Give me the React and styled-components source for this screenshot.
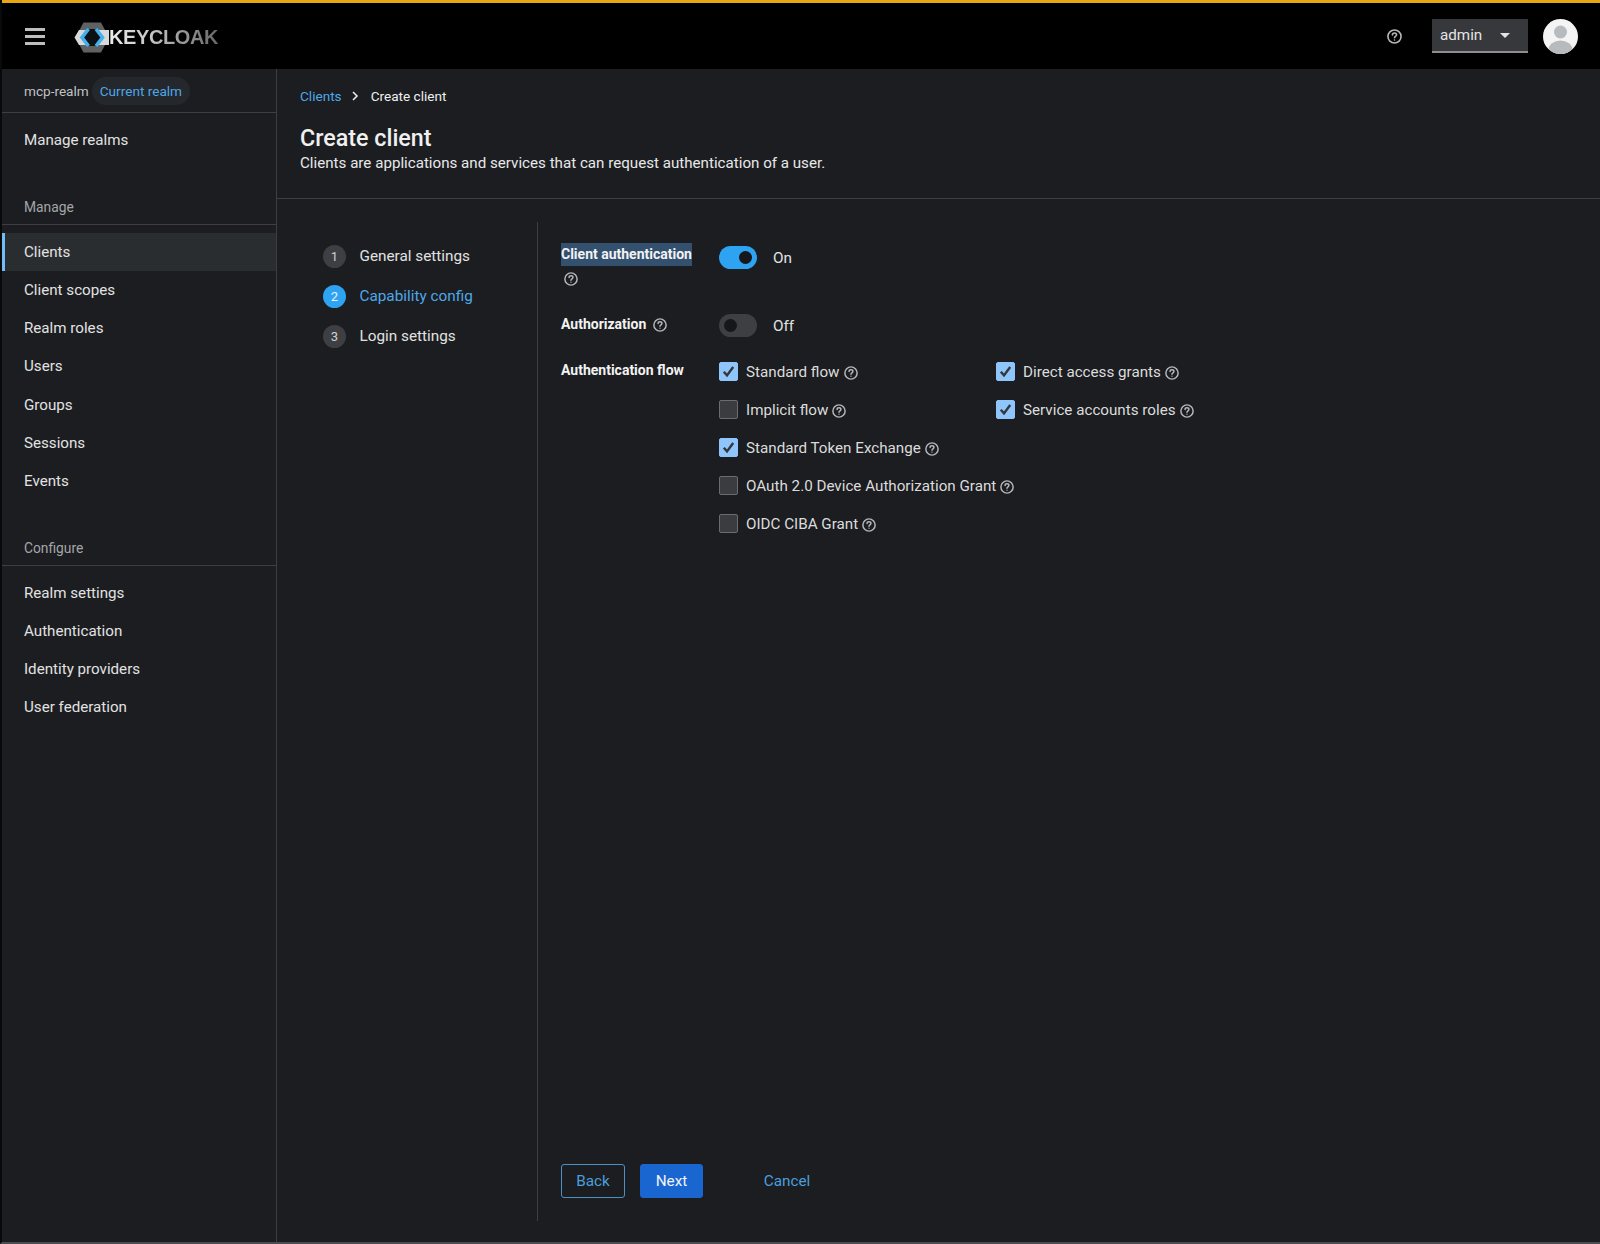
import React from 'react';
import styled, { createGlobalStyle } from 'styled-components';

const Global = createGlobalStyle`
  html, body { margin: 0; padding: 0; background: #1b1d21; }
  body { font-family: Roboto, "Noto Sans", sans-serif; color: #e0e0e0; }
  * { box-sizing: border-box; }
`;

const Page = styled.div`
  width: 1600px;
  height: 1244px;
  display: flex;
  flex-direction: column;
  background: #1b1d21;
  border-left: 2px solid #08090a;
  border-bottom: 2px solid #4a4c50;
  overflow: hidden;
`;

const Header = styled.header`
  height: 69px;
  flex: none;
  background: #000;
  border-top: 3px solid #e8a811;
  display: flex;
  align-items: center;
  padding: 0 22px 0 23px;
`;

const Burger = styled.div`
  width: 20px;
  display: flex;
  flex-direction: column;
  gap: 4px;
  margin-right: 29px;
  span { height: 3px; background: #bdbdbd; display: block; }
`;

const Logo = styled.div`
  display: flex;
  align-items: center;
  margin-top: 3px;
`;

const LogoText = styled.span`
  font-family: "Liberation Sans", Arial, sans-serif;
  font-weight: 700;
  font-size: 20px;
  letter-spacing: -0.4px;
  margin-left: -2px;
  background: linear-gradient(90deg, #ececec 0%, #c4c4c4 40%, #666 100%);
  -webkit-background-clip: text;
  background-clip: text;
  color: transparent;
`;

const HeaderRight = styled.div`
  margin-left: auto;
  display: flex;
  align-items: center;
`;

const UserSelect = styled.div`
  width: 96px;
  height: 34px;
  margin-left: 30px;
  margin-right: 15px;
  background: #36383c;
  border-bottom: 2px solid #8e8e8e;
  display: flex;
  align-items: center;
  justify-content: space-between;
  padding: 0 18px 0 8px;
  font-size: 15.2px;
  color: #e4e4e4;
`;

const Caret = styled.span`
  width: 0;
  height: 0;
  border-left: 5px solid transparent;
  border-right: 5px solid transparent;
  border-top: 5px solid #e4e4e4;
`;

const Body = styled.div`
  flex: 1;
  display: flex;
  min-height: 0;
`;

const Sidebar = styled.aside`
  width: 275px;
  flex: none;
  border-right: 1px solid #3c3e42;
  display: flex;
  flex-direction: column;
`;

const RealmRow = styled.div`
  height: 44px;
  flex: none;
  border-bottom: 1px solid #3c3e42;
  display: flex;
  align-items: center;
  padding: 0 0 0 22px;
  margin-bottom: 8px;
  font-size: 13.6px;
  color: #c0c2c4;
`;

const RealmBadge = styled.span`
  margin-left: 3px;
  height: 28px;
  padding: 0 8px;
  border-radius: 14px;
  background: #24272b;
  color: #4ea8e8;
  display: flex;
  align-items: center;
`;

const NavItem = styled.div`
  height: 38.1px;
  display: flex;
  align-items: center;
  padding-left: 22px;
  font-size: 15.15px;
  color: #e2e2e2;
  background: ${p => (p.$active ? '#2a2d30' : 'transparent')};
  box-shadow: ${p => (p.$active ? 'inset 3px 0 0 #73bcf7' : 'none')};
`;

const NavGroup = styled.div`
  margin-top: 31px;
`;

const NavTitle = styled.div`
  height: 35px;
  padding-left: 22px;
  border-bottom: 1px solid #3c3e42;
  margin-bottom: 8px;
  font-size: 13.8px;
  color: #a4a6a8;
  display: flex;
  align-items: center;
`;

const Main = styled.main`
  flex: 1;
  min-width: 0;
  display: flex;
  flex-direction: column;
`;

const PageHead = styled.section`
  height: 130px;
  flex: none;
  border-bottom: 1px solid #3c3e42;
  padding: 17px 23px 0;
`;

const Breadcrumb = styled.nav`
  display: flex;
  align-items: center;
  height: 20px;
  font-size: 13.6px;
  color: #f0f0f0;
  a { color: #4ea8e8; }
  svg { margin: 0 12px 0 9px; }
`;

const Title = styled.h1`
  margin: 18px 0 0;
  font-size: 23.3px;
  line-height: 28px;
  font-weight: 500;
  color: #f0f0f0;
`;

const Subtitle = styled.p`
  margin: 0;
  font-size: 15.15px;
  line-height: 22px;
  color: #e8e8e8;
`;

const Wizard = styled.section`
  flex: 1;
  min-height: 0;
  display: flex;
  padding: 23px 0 21px;
`;

const Steps = styled.ol`
  width: 261px;
  flex: none;
  margin: 0;
  padding: 14px 0 0 46px;
  list-style: none;
  border-right: 1px solid #3c3e42;
`;

const Step = styled.li`
  height: 40px;
  display: flex;
  align-items: center;
  font-size: 15.3px;
  color: ${p => (p.$current ? '#4ea8e8' : '#e2e2e2')};
`;

const StepNumber = styled.span`
  width: 23px;
  height: 23px;
  border-radius: 50%;
  margin-right: 13.5px;
  background: ${p => (p.$current ? '#2ea3f2' : '#3d3f43')};
  color: ${p => (p.$current ? '#e6f4ff' : '#d0d0d0')};
  font-size: 13px;
  display: flex;
  align-items: center;
  justify-content: center;
`;

const Panel = styled.div`
  flex: 1;
  display: flex;
  flex-direction: column;
  padding: 21px 0 0 23px;
`;

const FormRow = styled.div`
  display: grid;
  grid-template-columns: 158px 1fr;
  align-items: start;
  margin-bottom: ${p => p.$gap || 0}px;
`;

const Label = styled.div`
  font-size: 14px;
  font-weight: 700;
  line-height: 20px;
  color: #f2f2f2;
  white-space: nowrap;
  display: flex;
  align-items: center;
`;

const Marked = styled.span`
  display: inline-block;
  height: 23px;
  line-height: 23px;
  background: #33506f;
`;

const LabelStack = styled.div`
  display: flex;
  flex-direction: column;
  align-items: flex-start;
  gap: 6px;
`;

const ToggleRow = styled.div`
  display: flex;
  align-items: center;
  height: 23px;
  margin-top: ${p => p.$top || 0}px;
  font-size: 15.3px;
  color: #e2e2e2;
`;

const Track = styled.span`
  width: 38px;
  height: 23px;
  border-radius: 12px;
  margin-right: 16px;
  background: ${p => (p.$on ? '#2ea3f2' : '#3d3f43')};
  display: flex;
  align-items: center;
  justify-content: ${p => (p.$on ? 'flex-end' : 'flex-start')};
  padding: 0 5px;
  &::after {
    content: '';
    width: 13px;
    height: 13px;
    border-radius: 50%;
    background: #15171a;
  }
`;

const FlowGrid = styled.div`
  display: grid;
  grid-template-columns: 277px 1fr;
  grid-auto-rows: 38.1px;
`;

const CheckRow = styled.div`
  display: flex;
  align-items: center;
  height: 23px;
  font-size: 15.2px;
  color: #dcdcdc;
  white-space: nowrap;
`;

const Box = styled.span`
  width: 19px;
  height: 19px;
  flex: none;
  margin-right: 8px;
  border-radius: 2px;
  background: ${p => (p.$on ? '#8fc5fb' : '#3a3c40')};
  border: 1px solid ${p => (p.$on ? '#8fc5fb' : '#6a6c70')};
  display: flex;
  align-items: center;
  justify-content: center;
`;

const Actions = styled.div`
  margin-top: auto;
  display: flex;
  align-items: center;
  padding-bottom: 23px;
`;

const Button = styled.button`
  height: 34px;
  width: ${p => p.$w}px;
  margin-right: ${p => p.$mr || 0}px;
  padding: 0;
  border-radius: 3px;
  font-family: inherit;
  font-size: 15.3px;
  color: ${p => (p.$primary ? '#f4f4f4' : '#4a9fdc')};
  background: ${p => (p.$primary ? '#1a66d1' : 'transparent')};
  border: 1px solid ${p => (p.$primary ? '#1a66d1' : p.$link ? 'transparent' : '#4c91c4')};
`;

const Help = ({ size = 14, ml = 4, mt = 3 }) => (
  <svg width={size} height={size} viewBox="0 0 16 16" fill="none" stroke="#b4b6b8" strokeWidth="1.7"
    style={{ marginLeft: ml, marginTop: mt, flex: 'none' }}>
    <circle cx="8" cy="8" r="7" />
    <path d="M5.8 6.3c0-1.3 1-2 2.2-2s2.2.8 2.2 1.9c0 1.6-2.2 1.6-2.2 3.2" strokeLinecap="round" />
    <circle cx="8" cy="11.6" r="0.8" fill="#b4b6b8" stroke="none" />
  </svg>
);

const Check = () => (
  <svg width="13" height="13" viewBox="0 0 13 13" fill="none" stroke="#33363a" strokeWidth="2.4">
    <path d="M1.8 6.8l3.2 3.6 6.2-8.4" />
  </svg>
);

const KeycloakMark = () => (
  <svg width="37" height="31" viewBox="0 0 37 31">
    <path d="M9.5 0.5H27L35 15.5 27 30.5H9.5L1.5 15.5z" fill="#5f6163" />
    <path d="M0.5 15.5L5 8H35V23H5z" fill="#d8d9da" />
    <path d="M13.5 7H23L29 15.5 23 24H13.5L7.5 15.5z" fill="#0d1114" />
    <path d="M14.5 7L8 15.5 14.5 24M22 7L28.5 15.5 22 24" fill="none" stroke="#45b0ee" strokeWidth="3.6" />
  </svg>
);

const Avatar = () => (
  <svg width="35" height="35" viewBox="0 0 35 35">
    <defs><clipPath id="av"><circle cx="17.5" cy="17.5" r="17.5" /></clipPath></defs>
    <circle cx="17.5" cy="17.5" r="17.5" fill="#f4f4f4" />
    <g clipPath="url(#av)" fill="#b8bbbe">
      <circle cx="17.5" cy="13" r="6.5" />
      <ellipse cx="17.5" cy="31" rx="12" ry="9.5" />
    </g>
  </svg>
);

const manage = ['Client scopes', 'Realm roles', 'Users', 'Groups', 'Sessions', 'Events'];
const configure = ['Realm settings', 'Authentication', 'Identity providers', 'User federation'];
const steps = ['General settings', 'Capability config', 'Login settings'];
const flows = [
  ['Standard flow', true],
  ['Direct access grants', true],
  ['Implicit flow', false],
  ['Service accounts roles', true],
  ['Standard Token Exchange', true],
  null,
  ['OAuth 2.0 Device Authorization Grant', false],
  null,
  ['OIDC CIBA Grant', false],
];

export default function App() {
  return (
    <Page>
      <Global />
      <Header>
        <Burger><span /><span /><span /></Burger>
        <Logo>
          <KeycloakMark />
          <LogoText>KEYCLOAK</LogoText>
        </Logo>
        <HeaderRight>
          <Help size={15} ml={0} mt={0} />
          <UserSelect>admin<Caret /></UserSelect>
          <Avatar />
        </HeaderRight>
      </Header>
      <Body>
        <Sidebar>
          <RealmRow>mcp-realm<RealmBadge>Current realm</RealmBadge></RealmRow>
          <NavItem>Manage realms</NavItem>
          <NavGroup>
            <NavTitle>Manage</NavTitle>
            <NavItem $active>Clients</NavItem>
            {manage.map(m => <NavItem key={m}>{m}</NavItem>)}
          </NavGroup>
          <NavGroup>
            <NavTitle>Configure</NavTitle>
            {configure.map(m => <NavItem key={m}>{m}</NavItem>)}
          </NavGroup>
        </Sidebar>
        <Main>
          <PageHead>
            <Breadcrumb>
              <a>Clients</a>
              <svg width="8" height="10" viewBox="0 0 8 10" fill="none" stroke="#e8e8e8" strokeWidth="1.6"><path d="M2 1l4 4-4 4" /></svg>
              Create client
            </Breadcrumb>
            <Title>Create client</Title>
            <Subtitle>Clients are applications and services that can request authentication of a user.</Subtitle>
          </PageHead>
          <Wizard>
            <Steps>
              {steps.map((s, i) => (
                <Step key={s} $current={i === 1}>
                  <StepNumber $current={i === 1}>{i + 1}</StepNumber>{s}
                </Step>
              ))}
            </Steps>
            <Panel>
              <FormRow $gap={28}>
                <LabelStack>
                  <Label><Marked>Client authentication</Marked></Label>
                  <Help size={14} ml={3} mt={0} />
                </LabelStack>
                <ToggleRow $top={3}><Track $on />On</ToggleRow>
              </FormRow>
              <FormRow $gap={23}>
                <Label>Authorization<Help size={14} ml={7} mt={2} /></Label>
                <ToggleRow><Track />Off</ToggleRow>
              </FormRow>
              <FormRow>
                <Label>Authentication flow</Label>
                <FlowGrid>
                  {flows.map((f, i) => (f ? (
                    <CheckRow key={f[0]}>
                      <Box $on={f[1]}>{f[1] && <Check />}</Box>
                      {f[0]}
                      <Help />
                    </CheckRow>
                  ) : <span key={i} />))}
                </FlowGrid>
              </FormRow>
              <Actions>
                <Button $w={64} $mr={15}>Back</Button>
                <Button $w={63} $mr={44} $primary>Next</Button>
                <Button $w={80} $link>Cancel</Button>
              </Actions>
            </Panel>
          </Wizard>
        </Main>
      </Body>
    </Page>
  );
}
